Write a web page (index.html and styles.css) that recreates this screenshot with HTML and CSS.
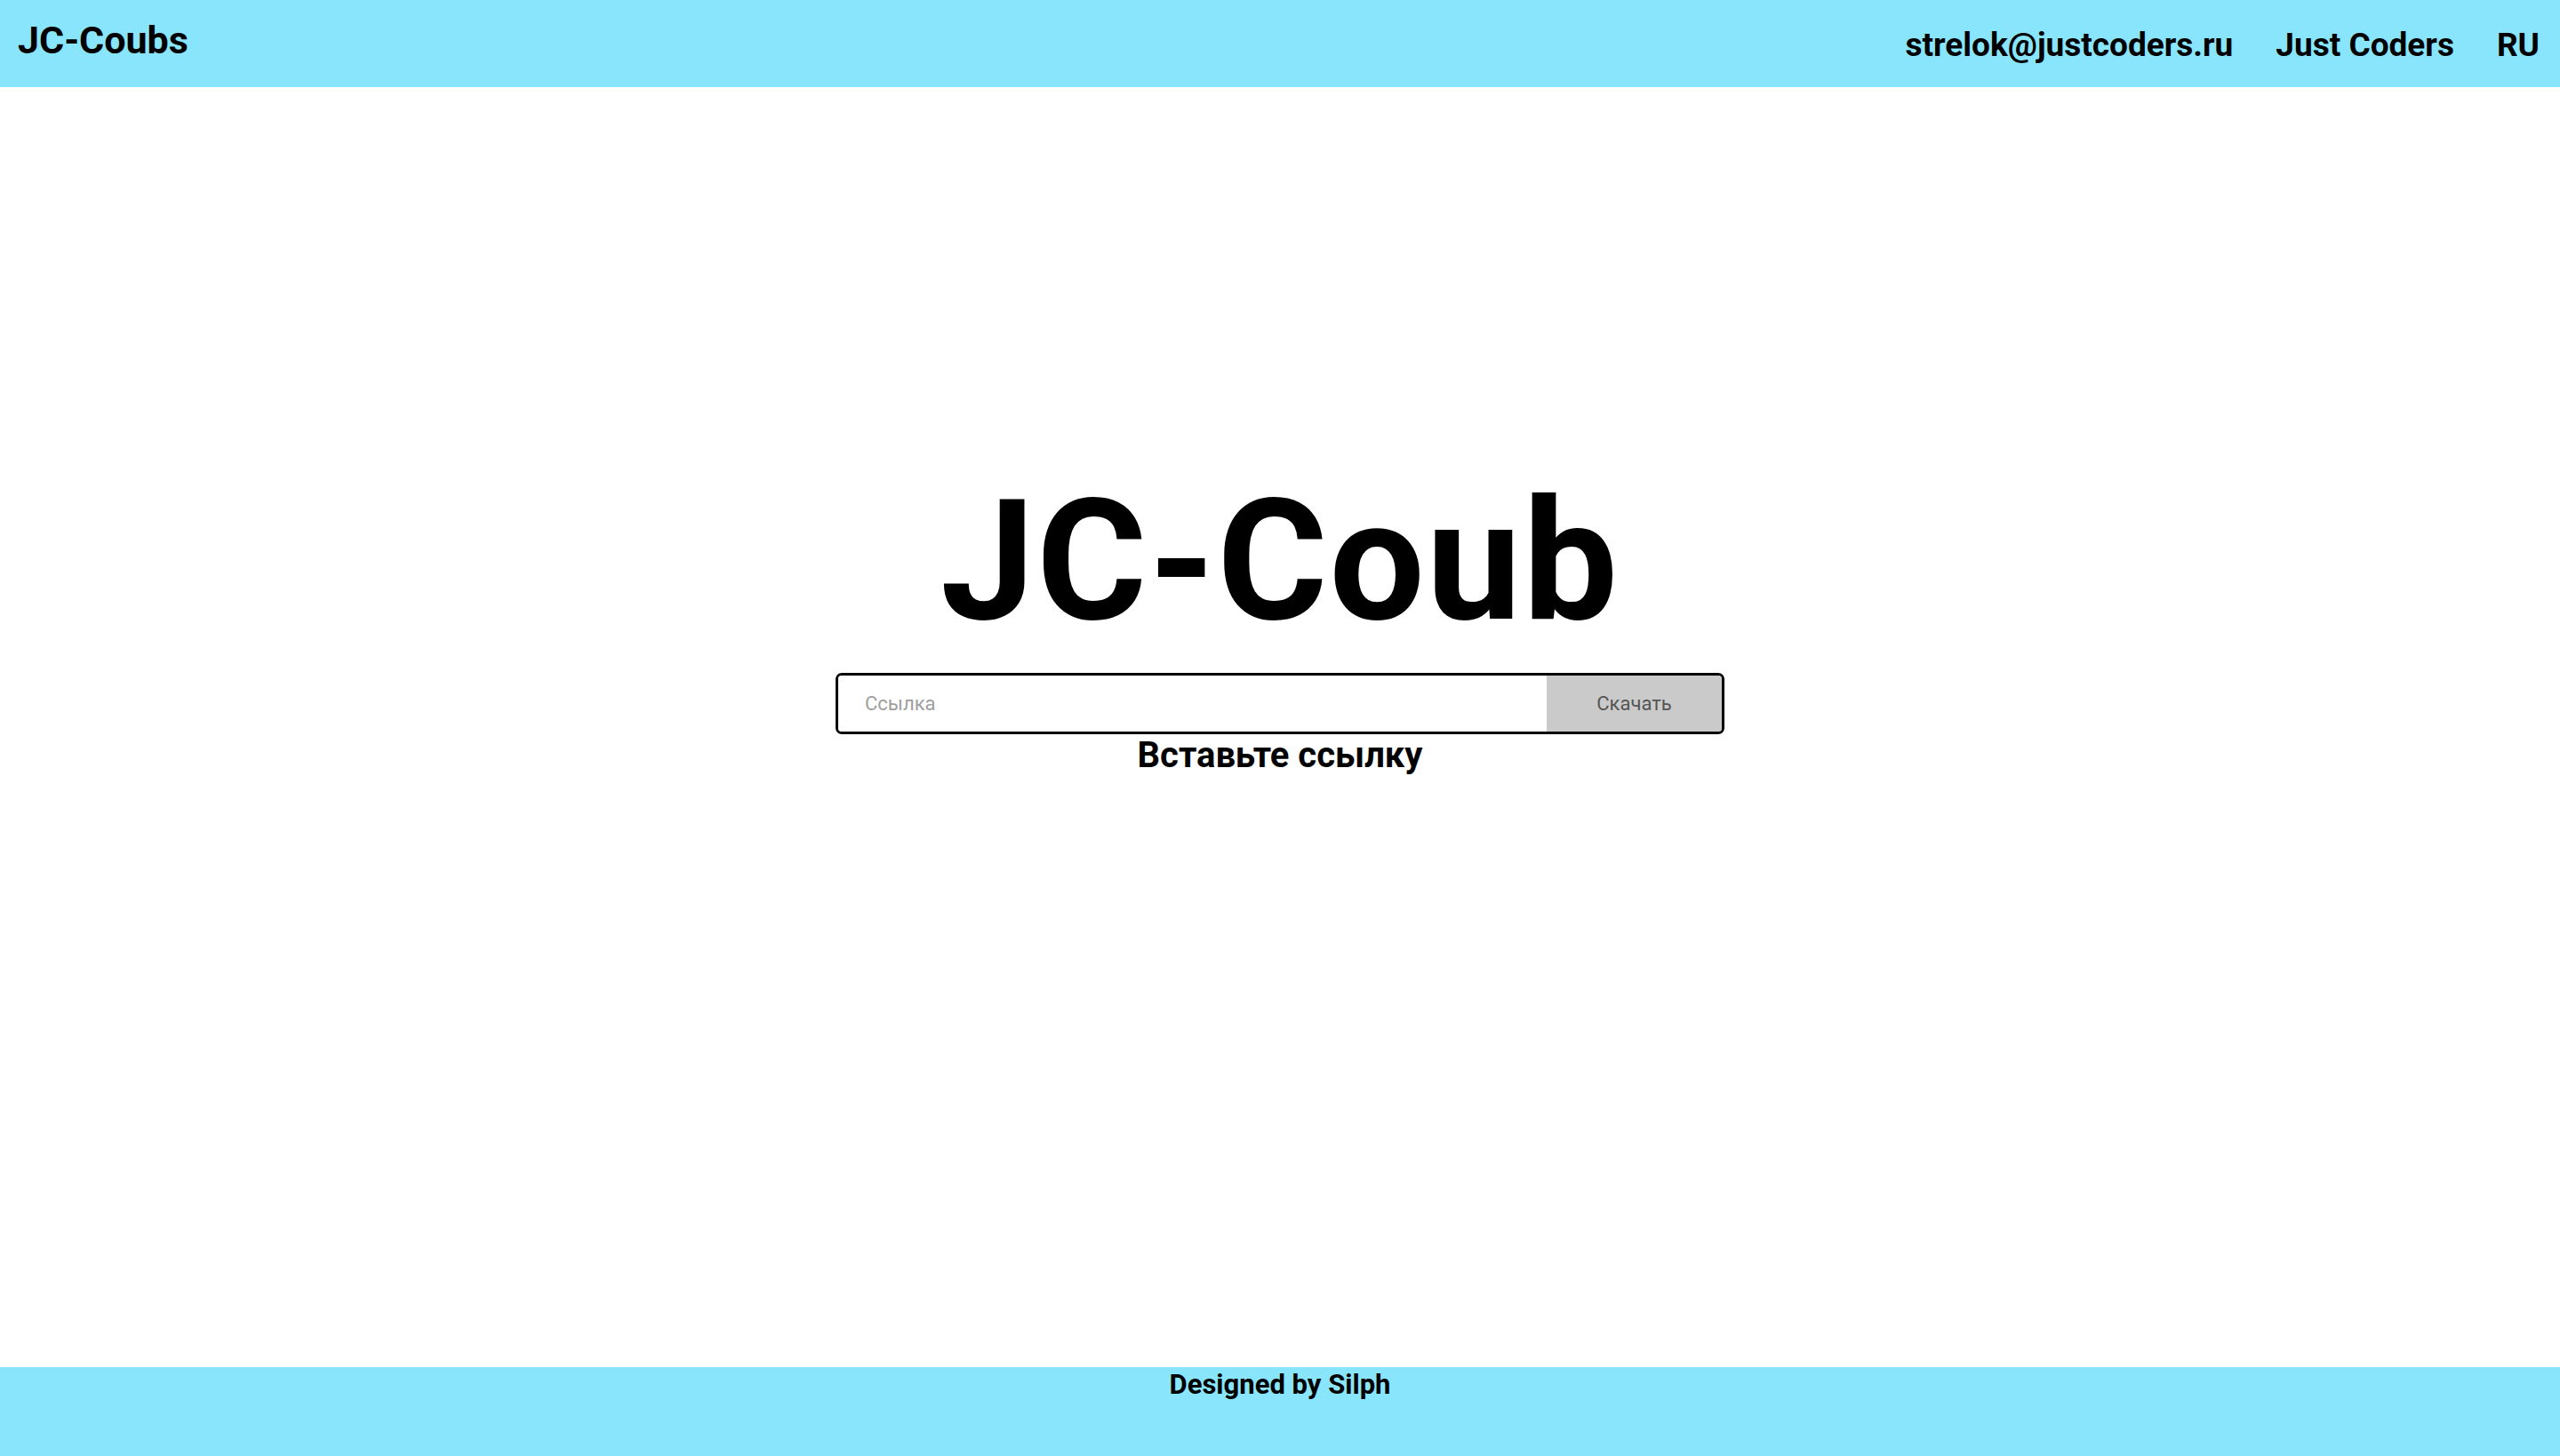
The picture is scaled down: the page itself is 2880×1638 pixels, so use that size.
FILE: index.html
```html
<!DOCTYPE html>
<html lang="ru">
<head>
<meta charset="utf-8">
<title>JC-Coubs</title>
<link rel="stylesheet" href="styles.css">
</head>
<body>
<header class="topbar">
  <a class="logo" href="#">JC-Coubs</a>
  <nav class="nav">
    <a href="#">strelok@justcoders.ru</a>
    <a href="#">Just Coders</a>
    <a href="#">RU</a>
  </nav>
</header>
<main class="main">
  <h1 class="title">JC-Coub</h1>
  <form class="search">
    <input class="search-input" type="text" placeholder="Ссылка">
    <button class="search-btn" type="button">Скачать</button>
  </form>
  <p class="hint">Вставьте ссылку</p>
</main>
<footer class="footer">
  <span class="credit">Designed by Silph</span>
</footer>
</body>
</html>
```
FILE: styles.css
```css
* { box-sizing: border-box; }
html, body { margin: 0; padding: 0; }
body {
  min-height: 100vh;
  display: flex;
  flex-direction: column;
  font-family: Roboto, "Noto Sans", sans-serif;
  color: #000;
  background: #fff;
}
a { color: inherit; text-decoration: none; }

.topbar {
  height: 98px;
  background: #89e5fb;
  display: flex;
  align-items: flex-start;
  justify-content: space-between;
  padding: 0 23px 0 20px;
}
.logo {
  font-weight: 700;
  font-size: 43px;
  line-height: 50px;
  margin-top: 20px;
}
.nav {
  display: flex;
  gap: 48px;
  margin-top: 30px;
}
.nav a {
  font-weight: 700;
  font-size: 37px;
  line-height: 42px;
}

.main {
  flex: 1;
  display: flex;
  flex-direction: column;
  align-items: center;
  padding-top: 422px;
}
.title {
  margin: 0;
  font-size: 190px;
  line-height: 223px;
  font-weight: 700;
  letter-spacing: 2px;
}
.search {
  margin-top: 14px;
  width: 1000px;
  height: 69px;
  border: 3px solid #000;
  border-radius: 7px;
  overflow: hidden;
  display: flex;
}
.search-input {
  flex: 1;
  border: 0;
  outline: 0;
  padding: 0 30px;
  font-family: Roboto, sans-serif;
  font-size: 22px;
  color: #333;
  background: #fff;
}
.search-input::placeholder { color: #9e9e9e; }
.search-btn {
  width: 197px;
  border: 0;
  background: #cacaca;
  color: #555;
  font-family: Roboto, sans-serif;
  font-size: 22px;
  padding: 0;
}
.hint {
  margin: 4px 0 0;
  font-weight: 700;
  font-size: 40px;
  line-height: 40px;
}

.footer {
  height: 100px;
  background: #89e5fb;
  display: flex;
  justify-content: center;
  align-items: flex-start;
}
.credit {
  font-weight: 700;
  font-size: 31px;
  line-height: 36px;
  margin-top: 2px;
}
```
